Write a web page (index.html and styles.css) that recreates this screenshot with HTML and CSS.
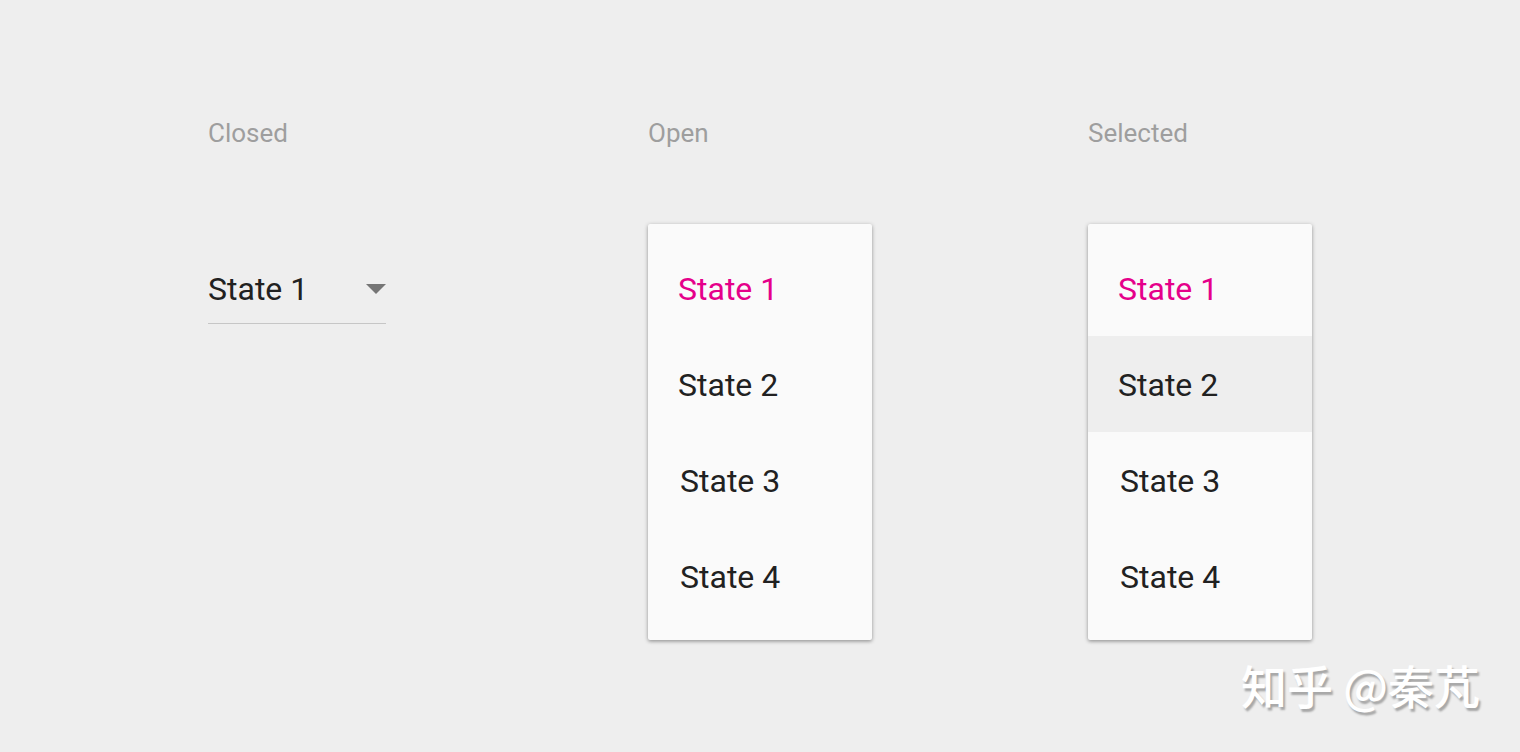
FILE: index.html
```html
<!DOCTYPE html>
<html lang="en">
<head>
    <meta charset="UTF-8">
    <meta name="viewport" content="width=device-width, initial-scale=1.0">
    <title>Dropdown Menu States</title>
    <link rel="stylesheet" href="styles.css">
</head>
<body>

<div class="states">
    <!-- Closed -->
    <div class="state">
        <div class="state-label">Closed</div>
        <div class="field">
            <span class="field-value">State 1</span>
            <span class="field-arrow"></span>
        </div>
    </div>

    <!-- Open -->
    <div class="state">
        <div class="state-label">Open</div>
        <ul class="menu">
            <li class="menu-item active">State 1</li>
            <li class="menu-item">State 2</li>
            <li class="menu-item shifted">State 3</li>
            <li class="menu-item shifted">State 4</li>
        </ul>
    </div>

    <!-- Selected -->
    <div class="state">
        <div class="state-label">Selected</div>
        <ul class="menu">
            <li class="menu-item active">State 1</li>
            <li class="menu-item hover">State 2</li>
            <li class="menu-item shifted">State 3</li>
            <li class="menu-item shifted">State 4</li>
        </ul>
    </div>
</div>

<div class="watermark">知乎 @秦芃</div>

</body>
</html>
```

FILE: styles.css
```css
body {
    font-family: Roboto, "Noto Sans", sans-serif;
    background-color: #eeeeee;
    margin: 0;
    padding: 0;
    height: 752px;
    overflow: hidden;
}
.states {
    display: grid;
    grid-template-columns: 440px 440px 440px;
    padding: 117px 0 0 208px;
}
.state {
    display: flex;
    flex-direction: column;
    align-items: flex-start;
}
.state-label {
    font-size: 26px;
    line-height: 32px;
    color: #9e9e9e;
    margin-bottom: 75px;
}
.field {
    display: flex;
    align-items: center;
    justify-content: space-between;
    width: 178px;
    height: 66px;
    padding-bottom: 1px;
    margin-top: 32px;
    border-bottom: 1px solid #c6c6c6;
}
.field-value {
    font-size: 32px;
    color: #212121;
}
.field-arrow {
    width: 0;
    height: 0;
    border-left: 10px solid transparent;
    border-right: 10px solid transparent;
    border-top: 10px solid #757575;
}
.menu {
    list-style: none;
    margin: 0;
    padding: 16px 0;
    width: 224px;
    background-color: #fafafa;
    border-radius: 2px;
    box-shadow: 0 1px 4px rgba(0, 0, 0, 0.3), 0 2px 3px rgba(0, 0, 0, 0.12);
}
.menu-item {
    height: 96px;
    line-height: 98px;
    padding-left: 30px;
    font-size: 32px;
    color: #212121;
}
.menu-item.shifted {
    padding-left: 32px;
}
.menu-item.active {
    color: #e5008a;
}
.menu-item.hover {
    background-color: #eeeeee;
}
.watermark {
    position: absolute;
    right: 40px;
    top: 654px;
    font-family: "Noto Sans CJK SC", sans-serif;
    font-size: 46px;
    font-weight: 500;
    line-height: 60px;
    color: #ffffff;
    text-shadow: 2px 3px 2px rgba(0, 0, 0, 0.3);
}
```
